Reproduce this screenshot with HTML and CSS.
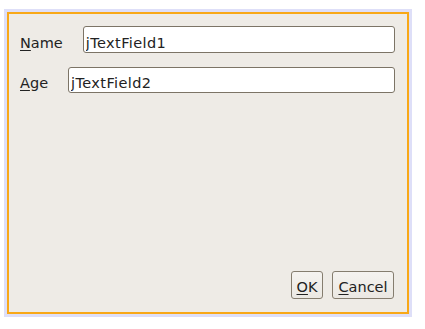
FILE: index.html
```html
<!DOCTYPE html>
<html lang="en">
<head>
    <meta charset="UTF-8">
    <title>Dialog</title>
    <link rel="stylesheet" href="styles.css">
</head>
<body>
    <div class="frame">
        <div class="panel">
            <!-- form rows -->
            <div class="row">
                <label class="lbl" for="name"><u>N</u>ame</label>
                <input class="field" id="name" type="text" value="jTextField1">
            </div>
            <div class="row row-age">
                <label class="lbl" for="age"><u>A</u>ge</label>
                <input class="field" id="age" type="text" value="jTextField2">
            </div>

            <div class="spacer"></div>

            <!-- dialog buttons -->
            <div class="buttons">
                <button class="btn btn-ok"><u>O</u>K</button>
                <button class="btn btn-cancel"><u>C</u>ancel</button>
            </div>
        </div>
    </div>
</body>
</html>
```

FILE: styles.css
```css
body {
    margin: 0;
    background-color: #ffffff;
    font-family: "DejaVu Sans", sans-serif;
    font-size: 14.5px;
    color: #222;
}

.frame {
    margin: 9px 0 0 4px;
    width: 408px;
    height: 308px;
    box-sizing: border-box;
    padding: 3px;
    background-color: #dedff8;
}

.panel {
    height: 100%;
    box-sizing: border-box;
    border: 2px solid #f8a818;
    background-color: #eeebe6;
    display: flex;
    flex-direction: column;
    padding: 12px 12px 13px 11px;
}

.row {
    display: flex;
    align-items: center;
    gap: 20px;
}

.row-age {
    margin-top: 14px;
}

.lbl {
    padding-top: 6px;
}

.lbl u {
    text-underline-offset: 2px;
}

.field {
    flex: 1;
    min-width: 0;
    height: 27px;
    box-sizing: border-box;
    border: 1px solid #7c7466;
    border-radius: 3px;
    background: #fff;
    padding: 6px 2px 0 2px;
    font-family: inherit;
    font-size: 14.5px;
    letter-spacing: 0.4px;
    color: #222;
    outline: none;
}

.row-age .field {
    height: 26px;
}

.spacer {
    flex: 1;
}

.buttons {
    display: flex;
    justify-content: flex-end;
    gap: 9px;
    padding-right: 1px;
}

.btn {
    height: 28px;
    box-sizing: border-box;
    padding: 4px 0 0 0;
    border: 1px solid #857d6f;
    border-radius: 3px;
    background: linear-gradient(#f5f3f0, #ebe8e3);
    font-family: inherit;
    font-size: 14.5px;
    color: #222;
    text-align: center;
}

.btn-ok {
    width: 32px;
}

.btn-cancel {
    width: 62px;
}

.btn u {
    text-underline-offset: 2px;
}
```
